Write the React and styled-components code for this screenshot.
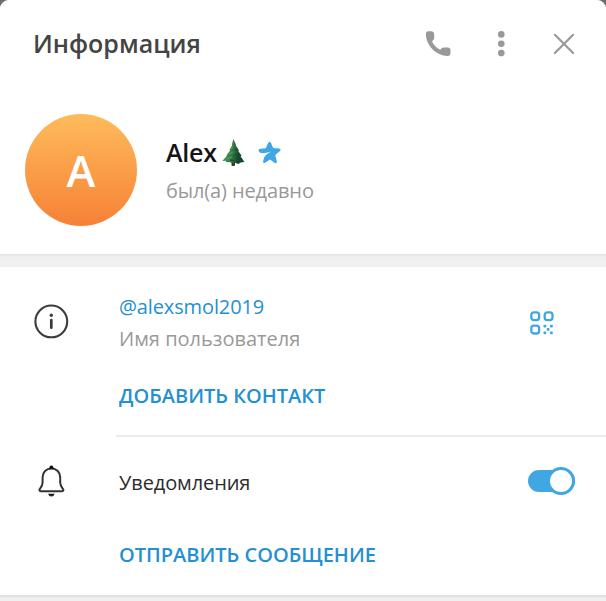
import { useState } from "react";
import styled, { createGlobalStyle } from "styled-components";

const GlobalStyle = createGlobalStyle`
    * {
        box-sizing: border-box;
    }

    body {
        margin: 0;
        background: #6c6c6c;
        font-family: "Open Sans", "Noto Sans", sans-serif;
        overflow: hidden;
    }
`;

const Window = styled.div`
    width: 606px;
    height: 601px;
    display: flex;
    flex-direction: column;
    background: #f0f0f0;
    border-radius: 9px 9px 0 0;
    overflow: hidden;
`;

const Header = styled.header`
    height: 88px;
    flex: none;
    display: flex;
    align-items: center;
    padding: 0 28px 0 33px;
    background: #fff;
`;

const Title = styled.h1`
    flex: 1;
    margin: 0;
    padding-bottom: 2px;
    font-size: 25px;
    line-height: 34px;
    font-weight: 600;
    color: #444;
`;

const IconButton = styled.button`
    width: 28px;
    height: 28px;
    margin-left: ${(props) => props.$gap || 0}px;
    padding: 0;
    border: none;
    background: none;

    svg {
        display: block;
    }
`;

const Profile = styled.section`
    height: 166px;
    flex: none;
    display: flex;
    padding: 26px 25px;
    background: #fff;
`;

const Avatar = styled.div`
    width: 112px;
    height: 112px;
    display: flex;
    align-items: center;
    justify-content: center;
    padding-top: 2px;
    border-radius: 50%;
    background: linear-gradient(#febb5b, #f68136);
    color: #fff;
    font-size: 43.5px;
    font-weight: 550;
    line-height: 58px;
`;

const ProfileText = styled.div`
    padding: 21px 0 0 29px;
`;

const NameRow = styled.div`
    display: flex;
    height: 42px;
`;

const Name = styled.span`
    width: 55px;
    font-size: 25px;
    line-height: 34px;
    font-weight: 600;
    color: #151515;
    letter-spacing: -0.2px;
`;

const Tree = styled.svg`
    margin-top: 4px;
`;

const Star = styled.svg`
    margin: 6px 0 0 13px;
`;

const Text = styled.div`
    height: 28px;
    font-size: 20px;
    line-height: 28px;
    color: ${(props) => props.$color || "#999"};
    letter-spacing: ${(props) => props.$spacing || 0}px;
    white-space: nowrap;
`;

const Gap = styled.div`
    height: 13px;
    flex: none;
    background: linear-gradient(#e0e0e0 0, #e6e6e6 1px, #f0f0f0 3px);
`;

const Details = styled.section`
    height: 328px;
    flex: none;
    background: #fff;
`;

const Row = styled.div`
    display: grid;
    grid-template-columns: 119px 1fr 78px;
    height: ${(props) => props.$height}px;
`;

const RowIcon = styled.div`
    padding: ${(props) => props.$top}px 0 0 ${(props) => props.$left || 0}px;

    svg {
        display: block;
    }
`;

const RowText = styled.div`
    padding-top: ${(props) => props.$top}px;
`;

const Action = styled.button`
    display: block;
    margin: ${(props) => props.$top}px 0 0;
    padding: 0;
    border: none;
    background: none;
    font-family: inherit;
    font-size: 20px;
    line-height: 28px;
    font-weight: 600;
    color: #2490d2;
    white-space: nowrap;
`;

const Divider = styled.div`
    height: 2px;
    margin-left: 116px;
    background: #ececec;
`;

const Switch = styled.button`
    width: 47px;
    height: 28px;
    display: flex;
    align-items: center;
    padding: 0;
    border: none;
    background: none;
`;

const Track = styled.span`
    width: 47px;
    height: 22px;
    display: flex;
    align-items: center;
    justify-content: ${(props) => (props.$on ? "flex-end" : "flex-start")};
    border-radius: 11px;
    background: ${(props) => (props.$on ? "#40a7e3" : "#b8b8b8")};
`;

const Thumb = styled.span`
    width: 28px;
    height: 28px;
    flex: none;
    border: 3px solid ${(props) => (props.$on ? "#40a7e3" : "#b8b8b8")};
    border-radius: 50%;
    background: #fff;
`;

const Footer = styled.div`
    flex: 1;
    background: linear-gradient(#e2e2e2 0, #e2e2e2 2px, #f0f0f0 3px);
`;

const PhoneIcon = () => (
    <svg width="28" height="28" viewBox="0 0 28 28" fill="#999">
        <path d="M3.300 1.300h2.900c1.900 0 2.800.9 2.900 2.800l.2 2.900c.1 1.500-.4 2.500-1.300 3.400l-1 1c1.800 3.700 4.400 6.500 8.300 8.400l1-1.200c.8-.9 1.800-1.300 3.200-1.200l3.300.2c1.900.1 2.700 1 2.700 2.600v2.900c0 2-1.100 3-3 2.900C11.200 25.600 1.200 15.800.9 4.300.9 2.400 1.500 1.300 3.300 1.300z" />
    </svg>
);

const DotsIcon = () => (
    <svg width="28" height="28" viewBox="0 0 28 28" fill="#999">
        <circle cx="13.300" cy="4.400" r="3.300" />
        <circle cx="13.300" cy="13.800" r="3.300" />
        <circle cx="13.300" cy="23.100" r="3.300" />
    </svg>
);

const CloseIcon = () => (
    <svg width="28" height="28" viewBox="0 0 28 28" stroke="#999" strokeWidth="2.200" strokeLinecap="round">
        <path d="M4.900 4.800l18.200 18.200M23.100 4.800L4.900 23" />
    </svg>
);

const TreeIcon = () => (
    <Tree width="24" height="28" viewBox="0 0 24 28">
        <defs>
            <linearGradient id="needles" x1="0" y1="0" x2="1" y2="0.2">
                <stop offset="0" stopColor="#55a362" />
                <stop offset="0.5" stopColor="#357f49" />
                <stop offset="0.85" stopColor="#17472c" />
            </linearGradient>
        </defs>
        <path d="M10.500 22h3.500v4.500q-1.700 1.200-3.500 0z" fill="#49301f" />
        <path
            d="M12.300 0l2.900 6-.5.300 3.400 5.200-1 .3 3.500 5-1 .5 3.800 5.600-3.700.6-2.200 1.400-3-1-3 .3-3-1.200-3 .2-1-1.500-3.300.4 5-5.500-1-.2 4-5-.8-.4 3-5-.5-.3z"
            fill="url(#needles)"
        />
        <path d="M10 10l2-2M8 15l4-2M6 20l5-2" stroke="#6aaa69" strokeWidth=".8" fill="none" />
        <path d="M14 10l2 2M14 15l4 3M9 21l4 .5M17 19l4 2" stroke="#174429" strokeWidth="1" fill="none" />
    </Tree>
);

const StarIcon = () => (
    <Star width="24" height="24" viewBox="0 0 24 24">
        <path
            d="M10.300 1.800q1.300-2.200 2.600 0l2.300 5.200 5.900.5q2.700.4.900 2.400l-4.800 4.200 1.600 6q.3 2.700-2 1.800L12 18.500l-4.900 3.300q-2.400 1-1.900-1.700l.9-3.700c1.700-2.400 4.300-4.200 7.100-5.800-3.900 1.300-7.900 2-11.200 1.200L.9 10.300q-1.200-2 1.200-2.500l5.600-.6z"
            fill="#40a7e3"
        />
    </Star>
);

const InfoIcon = () => (
    <svg width="36" height="36" viewBox="0 0 36 36">
        <circle cx="18.300" cy="18.400" r="15.900" fill="none" stroke="#3c3c3c" strokeWidth="2.100" />
        <circle cx="18.300" cy="12.300" r="1.700" fill="#3c3c3c" />
        <path d="M18.300 17v7.700" stroke="#3c3c3c" strokeWidth="2.700" strokeLinecap="round" />
    </svg>
);

const BellIcon = () => (
    <svg width="28" height="34" viewBox="0 0 28 34">
        <path
            d="M14.400 3.500c-5.200 0-8.800 3.700-8.800 8.800v5.200c0 3-1.300 4.600-2.700 6.400-.9 1.200-.5 2.300.8 2.300h21.400c1.300 0 1.700-1.100.8-2.300-1.400-1.800-2.700-3.400-2.700-6.400v-5.200c0-5.100-3.600-8.800-8.800-8.800z"
            fill="none"
            stroke="#333"
            strokeWidth="2"
        />
        <path d="M12.400 4V2.400q0-1.800 2-1.800t2 1.800V4z" fill="#111" />
        <path d="M11 28.800h6.800q-.8 2.700-3.400 2.700t-3.400-2.700z" fill="#222" />
    </svg>
);

const QrIcon = () => (
    <svg width="26" height="26" viewBox="0 0 26 26" fill="#40a7e3">
        <g fill="none" stroke="#40a7e3" strokeWidth="2.300">
            <rect x="2.300" y="2.300" width="7.800" height="7.800" rx="2.600" />
            <rect x="15.700" y="2.300" width="7.800" height="7.800" rx="2.600" />
            <rect x="2.300" y="15.700" width="7.800" height="7.800" rx="2.600" />
        </g>
        <rect x="14.500" y="14.700" width="2.800" height="2.800" rx=".7" />
        <rect x="21" y="14.700" width="2.800" height="2.800" rx=".7" />
        <rect x="17.700" y="18" width="2.800" height="2.800" rx=".7" />
        <rect x="14.500" y="21.400" width="2.800" height="2.800" rx=".7" />
        <rect x="21" y="21.400" width="2.800" height="2.800" rx=".7" />
    </svg>
);

const App = () => {

    const [notify, setNotify] = useState(true);

    return(
        <>
            <GlobalStyle />
            <Window>
                <Header>
                    <Title>Информация</Title>
                    <IconButton><PhoneIcon /></IconButton>
                    <IconButton $gap={35}><DotsIcon /></IconButton>
                    <IconButton $gap={34}><CloseIcon /></IconButton>
                </Header>
                <Profile>
                    <Avatar>A</Avatar>
                    <ProfileText>
                        <NameRow>
                            <Name>Alex</Name>
                            <TreeIcon />
                            <StarIcon />
                        </NameRow>
                        <Text $spacing={-0.12}>был(а) недавно</Text>
                    </ProfileText>
                </Profile>
                <Gap />
                <Details>
                    <Row $height={168}>
                        <RowIcon $top={36} $left={33}><InfoIcon /></RowIcon>
                        <RowText $top={26}>
                            <Text $color="#2490d2" $spacing={-0.12}>@alexsmol2019</Text>
                            <RowText $top={4}>
                                <Text>Имя пользователя</Text>
                            </RowText>
                            <Action $top={29}>ДОБАВИТЬ КОНТАКТ</Action>
                        </RowText>
                        <RowIcon $top={43} $left={1}><QrIcon /></RowIcon>
                    </Row>
                    <Divider />
                    <Row $height={158}>
                        <RowIcon $top={28} $left={37}><BellIcon /></RowIcon>
                        <RowText $top={32}>
                            <Text $color="#2c2c2c" $spacing={-0.1}>Уведомления</Text>
                            <Action $top={44}>ОТПРАВИТЬ СООБЩЕНИЕ</Action>
                        </RowText>
                        <RowIcon $top={30}>
                            <Switch onClick={() => setNotify(!notify)}>
                                <Track $on={notify}>
                                    <Thumb $on={notify} />
                                </Track>
                            </Switch>
                        </RowIcon>
                    </Row>
                </Details>
                <Footer />
            </Window>
        </>
    )
}

export default App;
